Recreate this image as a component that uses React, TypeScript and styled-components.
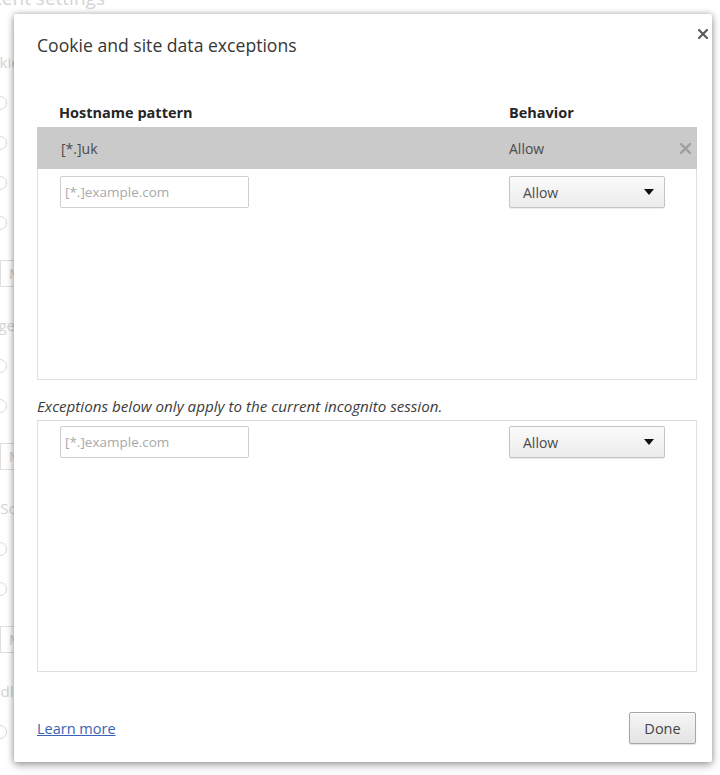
import React, { FC } from "react";
import styled, { createGlobalStyle } from "styled-components";

const UI_FONT = `"Open Sans", "Noto Sans", "DejaVu Sans", sans-serif`;

const GlobalStyle = createGlobalStyle`
  html, body {
    margin: 0;
    padding: 0;
    background: #ffffff;
  }
  body {
    font-family: ${UI_FONT};
  }
`;

type Exception = { pattern: string; behavior: string };

const regularExceptions: Exception[] = [{ pattern: "[*.]uk", behavior: "Allow" }];
const incognitoExceptions: Exception[] = [];

// faded settings page that peeks out at the left of the overlay
const backdropSections = [
  { title: "Cookies", radios: 4, button: true },
  { title: "Images", radios: 2, button: true },
  { title: "JavaScript", radios: 2, button: true },
  { title: "Handlers", radios: 1, button: false },
];

const CloseIcon: FC<{ size: number; color: string; weight: number }> = ({ size, color, weight }) => (
  <svg width={size} height={size} viewBox="0 0 10 10">
    <path d="M1 1 L9 9 M9 1 L1 9" stroke={color} strokeWidth={weight} strokeLinecap="square" />
  </svg>
);

const ExceptionList: FC<{ items: Exception[]; height: number }> = ({ items, height }) => (
  <ListBox $height={height}>
    {items.map((item) => (
      <EntryRow key={item.pattern}>
        <EntryText>{item.pattern}</EntryText>
        <EntryText>{item.behavior}</EntryText>
        <DeleteButton aria-label="Remove">
          <CloseIcon size={11} color="#a0a0a0" weight={2.2} />
        </DeleteButton>
      </EntryRow>
    ))}
    <InputRow $first={items.length === 0}>
      <PatternInput placeholder="[*.]example.com" />
      <BehaviorSelect>
        <span>Allow</span>
        <Arrow />
      </BehaviorSelect>
    </InputRow>
  </ListBox>
);

const App: FC = () => {
  return (
    <Page>
      <GlobalStyle />
      <Backdrop>
        <BackdropTitle>Content settings</BackdropTitle>
        {backdropSections.map((section) => (
          <BackdropSection key={section.title}>
            <BackdropHeading>{section.title}</BackdropHeading>
            {Array.from({ length: section.radios }).map((_, i) => (
              <BackdropRadio key={i} />
            ))}
            {section.button && <BackdropButton>Manage exceptions...</BackdropButton>}
          </BackdropSection>
        ))}
      </Backdrop>

      <Dialog>
        <DialogHeader>
          <DialogTitle>Cookie and site data exceptions</DialogTitle>
          <CloseButton aria-label="Close">
            <CloseIcon size={10} color="#5a5a5a" weight={2.1} />
          </CloseButton>
        </DialogHeader>

        <DialogBody>
          <ColumnHeaders>
            <ColumnTitle>Hostname pattern</ColumnTitle>
            <ColumnTitle>Behavior</ColumnTitle>
          </ColumnHeaders>
          <ExceptionList items={regularExceptions} height={253} />
          <IncognitoNote>Exceptions below only apply to the current incognito session.</IncognitoNote>
          <ExceptionList items={incognitoExceptions} height={252} />
        </DialogBody>

        <DialogFooter>
          <LearnMore href="#">Learn more</LearnMore>
          <DoneButton>Done</DoneButton>
        </DialogFooter>
      </Dialog>
    </Page>
  );
};

const Page = styled.div`
  position: relative;
  width: 720px;
  height: 775px;
  overflow: hidden;
  background: #ffffff;
`;

const Backdrop = styled.div`
  display: flex;
  flex-direction: column;
  margin: -14px 0 0 -40px;
  color: #d4d4d4;
  font-family: ${UI_FONT};
`;

const BackdropTitle = styled.div`
  font-size: 19px;
  line-height: 24px;
  margin-bottom: 42px;
`;

const BackdropSection = styled.div`
  display: flex;
  flex-direction: column;
  padding-left: 10px;
  margin-bottom: 28px;
`;

const BackdropHeading = styled.div`
  margin-left: 2px;
  font-size: 15px;
  line-height: 20px;
  margin-bottom: 24px;
`;

const BackdropRadio = styled.div`
  width: 12px;
  height: 12px;
  margin: 0 0 26px 23px;
  border: 1px solid #dadada;
  border-radius: 50%;
`;

const BackdropButton = styled.div`
  align-self: flex-start;
  margin: 4px 0 0 30px;
  padding: 3px 8px;
  border: 1px solid #e0e0e0;
  font-size: 14px;
  color: #d0d0d0;
`;

const Dialog = styled.div`
  position: absolute;
  left: 14px;
  top: 14px;
  width: 698px;
  height: 748px;
  box-sizing: border-box;
  display: flex;
  flex-direction: column;
  background: #ffffff;
  border-radius: 2px;
  box-shadow: 0 0 6px rgba(0, 0, 0, 0.3), 0 4px 9px rgba(0, 0, 0, 0.25);
`;

const DialogHeader = styled.div`
  display: flex;
  justify-content: space-between;
  align-items: flex-start;
  padding: 12px 1px 0 23px;
`;

const DialogTitle = styled.h1`
  margin: 7px 0 0;
  font-size: 17.6px;
  font-weight: 400;
  line-height: 24px;
  color: #363636;
`;

const CloseButton = styled.button`
  display: flex;
  align-items: center;
  justify-content: center;
  width: 16px;
  height: 16px;
  padding: 0;
  border: none;
  background: transparent;
`;

const DialogBody = styled.div`
  display: flex;
  flex-direction: column;
  padding: 0 15px 0 23px;
  margin-top: 40px;
`;

const ColumnHeaders = styled.div`
  display: grid;
  grid-template-columns: 450px 1fr;
  padding-left: 22px;
  height: 30px;
  align-items: center;
`;

const ColumnTitle = styled.div`
  font-size: 14.5px;
  font-weight: 700;
  color: #262626;
`;

const ListBox = styled.div<{ $height: number }>`
  height: ${(p) => p.$height}px;
  box-sizing: border-box;
  border: 1px solid #e0e0e0;
  border-top-color: #d6d6d6;
  display: flex;
  flex-direction: column;
`;

const EntryRow = styled.div`
  display: grid;
  grid-template-columns: 448px 1fr 30px;
  align-items: center;
  height: 42px;
  margin: -1px -1px 0;
  padding-left: 24px;
  background: #cacaca;
`;

const EntryText = styled.span`
  font-size: 14px;
  color: #4a4a4a;
`;

const DeleteButton = styled.button`
  display: flex;
  align-items: center;
  justify-content: center;
  padding: 0 0 0 6px;
  border: none;
  background: transparent;
`;

const InputRow = styled.div<{ $first: boolean }>`
  display: grid;
  grid-template-columns: 449px 156px;
  align-items: center;
  padding: ${(p) => (p.$first ? 5 : 7)}px 0 0 22px;
`;

const PatternInput = styled.input`
  width: 189px;
  height: 32px;
  box-sizing: border-box;
  padding: 0 4px;
  border: 1px solid #cfcfcf;
  border-radius: 2px;
  font-family: ${UI_FONT};
  font-size: 13.5px;
  color: #333;
  outline: none;
  &::placeholder {
    color: #a9a9a9;
  }
`;

const BehaviorSelect = styled.div`
  display: flex;
  align-items: center;
  justify-content: space-between;
  height: 32px;
  box-sizing: border-box;
  padding: 0 10px 0 13px;
  border: 1px solid #c4c4c4;
  border-radius: 2px;
  background: linear-gradient(#fafafa, #ececec);
  box-shadow: 0 1px 1px rgba(0, 0, 0, 0.08);
  font-size: 14px;
  color: #4a4a4a;
`;

const Arrow = styled.span`
  width: 0;
  height: 0;
  border-left: 5px solid transparent;
  border-right: 5px solid transparent;
  border-top: 6px solid #111111;
`;

const IncognitoNote = styled.div`
  margin: 17px 0 5px;
  font-size: 15.2px;
  font-style: italic;
  line-height: 18px;
  color: #3c3c3c;
`;

const DialogFooter = styled.div`
  margin-top: auto;
  display: flex;
  justify-content: space-between;
  align-items: center;
  padding: 0 16px 18px 23px;
`;

const LearnMore = styled.a`
  font-size: 14.5px;
  color: #3a62b5;
  text-decoration: underline;
`;

const DoneButton = styled.button`
  width: 67px;
  height: 32px;
  box-sizing: border-box;
  border: 1px solid #a6a6a6;
  border-radius: 2px;
  background: linear-gradient(#f6f6f6, #e3e3e3);
  box-shadow: inset 0 1px 0 #ffffff, 0 1px 1px rgba(0, 0, 0, 0.12);
  font-family: ${UI_FONT};
  font-size: 14.5px;
  color: #444444;
`;

export default App;
